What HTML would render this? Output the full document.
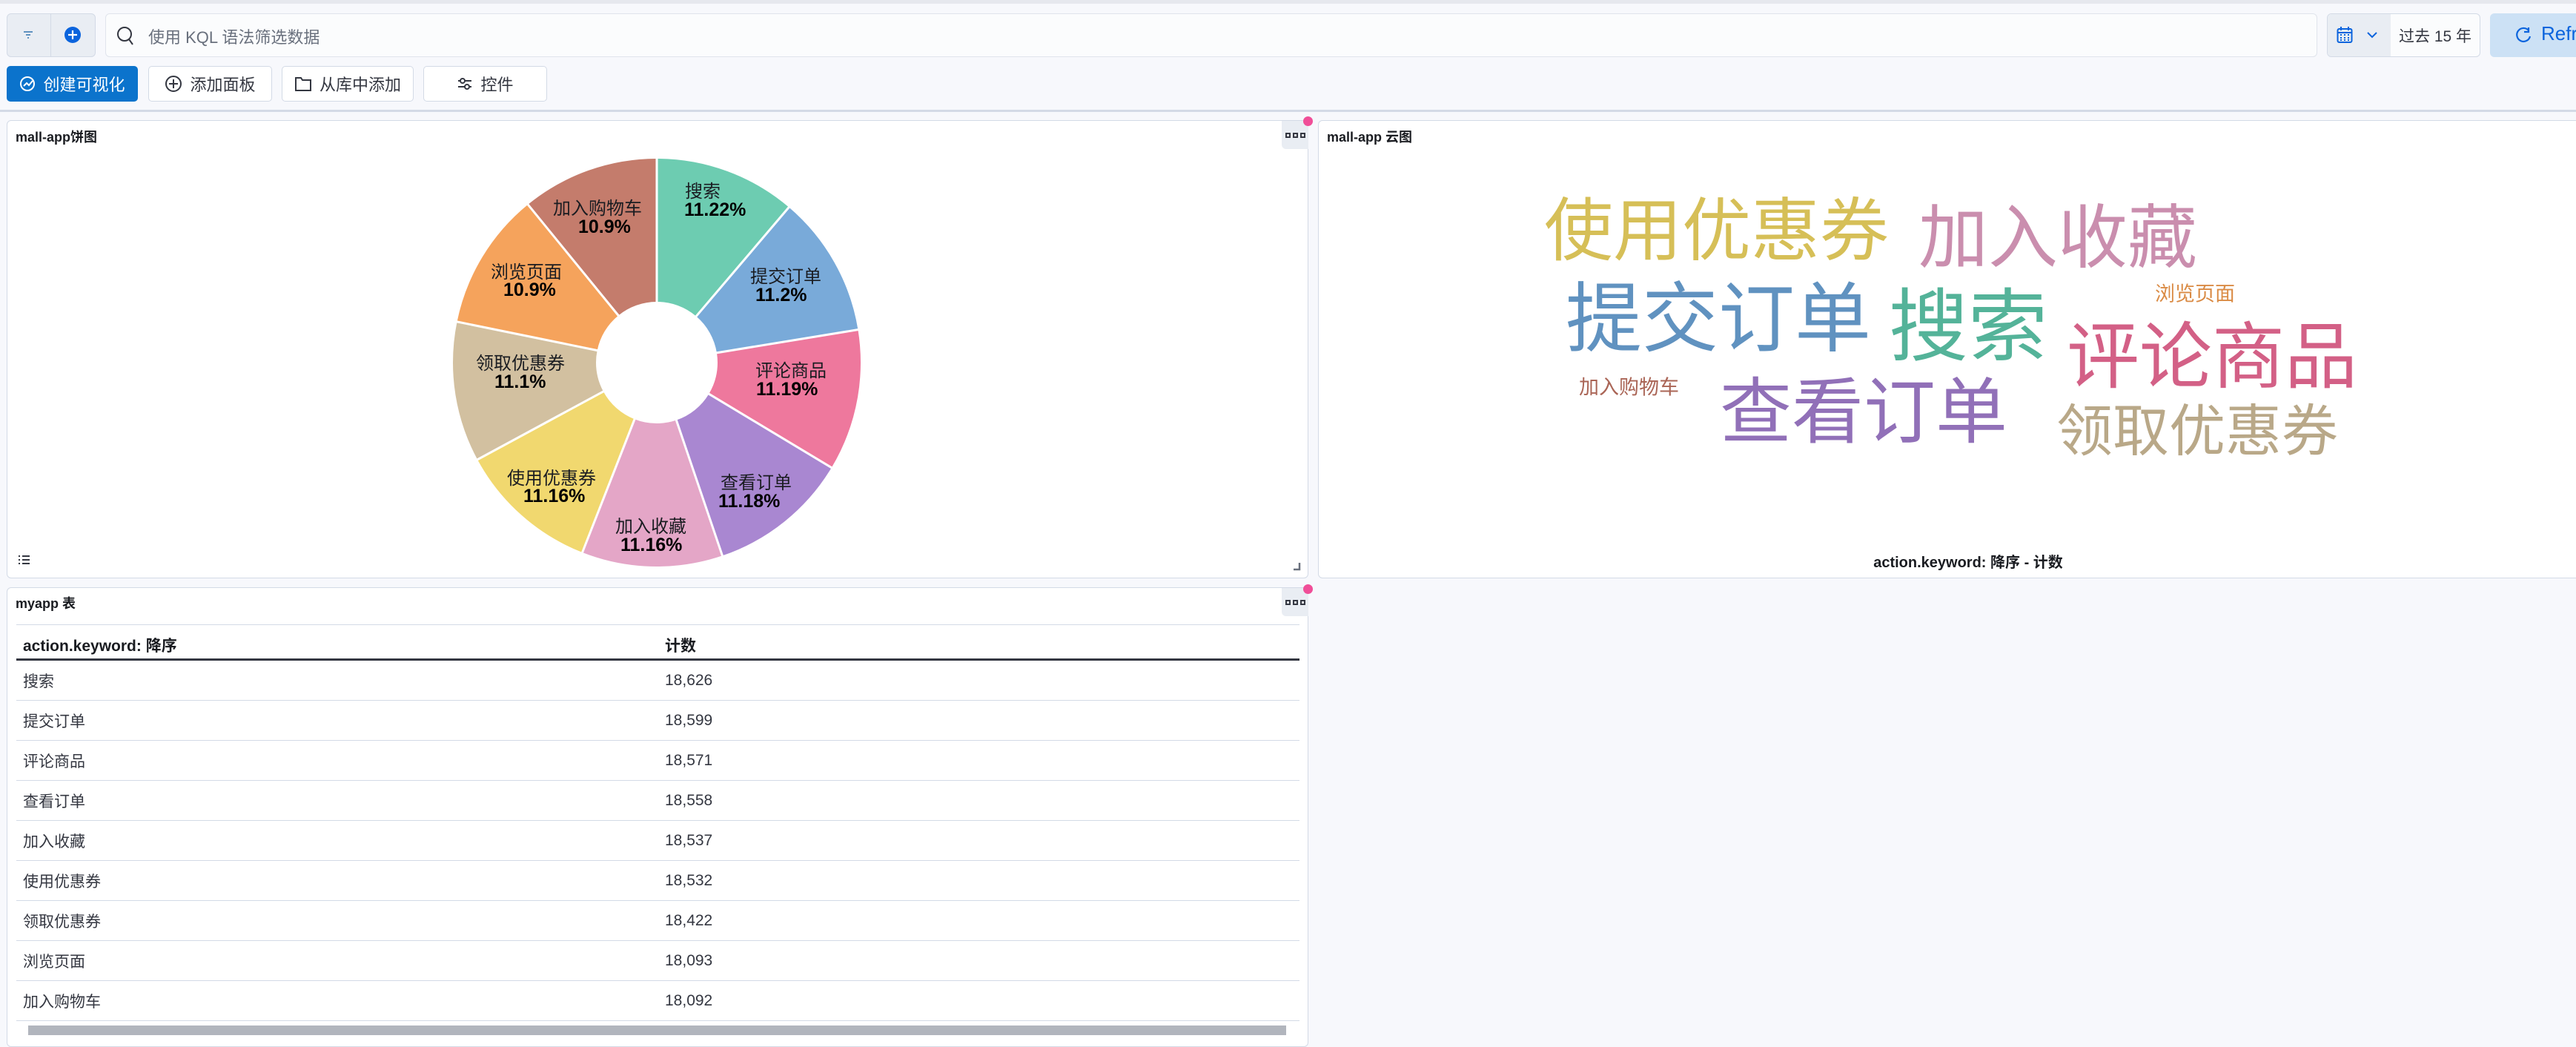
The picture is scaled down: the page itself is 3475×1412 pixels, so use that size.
<!DOCTYPE html>
<html><head><meta charset="utf-8"><style>
*{margin:0;padding:0;box-sizing:border-box}
body{width:3475px;height:1402px;background:#f7f8fc;font-family:"Liberation Sans","Noto Sans CJK SC",sans-serif;position:relative;overflow:hidden;color:#343741}
.abs{position:absolute}
.btn{position:absolute;top:89px;height:48px;border:1px solid #d3dae6;border-radius:5px;background:#fff;font-size:22px;display:flex;align-items:center;justify-content:center;gap:10px;color:#343741}
.panel{position:absolute;background:#fff;border:1px solid #d3dae6;border-radius:6px}
.ptitle{position:absolute;left:12px;top:8px;font-size:18px;font-weight:bold;color:#1a1c21}
.menu{position:absolute;width:36px;height:38px;background:#e9edf3;border-radius:0 0 0 6px;display:flex;align-items:center;justify-content:center;gap:3px}
.menu i{display:block;width:7px;height:7px;border:2px solid #343741}
.dot{position:absolute;width:13px;height:13px;border-radius:50%;background:#f04e98}
.row{position:absolute;left:22px;width:1731px;height:54px;border-bottom:1px solid #d3dae6;font-size:21px;color:#343741}
.row span{position:absolute;top:50%;transform:translateY(-50%)}
.wc{position:absolute;white-space:nowrap;line-height:1;transform:translateY(-50%)}
</style></head><body>
<div class="abs" style="left:0;top:0;width:3475px;height:5px;background:#e6e8ee"></div>
<div class="abs" style="left:9px;top:18px;width:120px;height:59px;background:#e9edf3;border:1px solid #d3dae6;border-radius:6px"></div>
<div class="abs" style="left:68px;top:19px;width:1px;height:57px;background:#d3dae6"></div>
<svg class="abs" style="left:30px;top:40px" width="16" height="14"><path d="M2 3h12M5 7h6M7 11h2" stroke="#6092c0" stroke-width="2"/></svg>
<svg class="abs" style="left:86px;top:35px" width="24" height="24"><circle cx="12" cy="12" r="11" fill="#0b64dd"/><path d="M12 6v12M6 12h12" stroke="#fff" stroke-width="2.2"/></svg>
<div class="abs" style="left:142px;top:18px;width:2984px;height:59px;background:#fbfcfd;border:1px solid #e0e4ec;border-radius:6px"></div>
<svg class="abs" style="left:156px;top:34px" width="28" height="30"><circle cx="12" cy="12" r="9" fill="none" stroke="#343741" stroke-width="2"/><path d="M18 19l5 7" stroke="#343741" stroke-width="2"/></svg>
<div class="abs" style="left:200px;top:33px;font-size:22px;color:#69707d">使用 KQL 语法筛选数据</div>
<div class="abs" style="left:3139px;top:18px;width:207px;height:59px;background:#fbfcfd;border:1px solid #d3dae6;border-radius:6px;overflow:hidden"><div style="width:85px;height:100%;background:#e9edf3"></div></div>
<svg class="abs" style="left:3152px;top:35px" width="22" height="24"><rect x="1.5" y="4" width="19" height="18" rx="2" fill="none" stroke="#0b64dd" stroke-width="2"/><path d="M2 9h18M6 1v5M16 1v5" stroke="#0b64dd" stroke-width="2"/><path d="M5 12h2M10 12h2M15 12h2M5 16h2M10 16h2M15 16h2M5 19h2M10 19h2M15 19h2" stroke="#0b64dd" stroke-width="2"/></svg>
<svg class="abs" style="left:3193px;top:42px" width="14" height="10"><path d="M1 2l6 6 6-6" stroke="#0b64dd" stroke-width="2" fill="none"/></svg>
<div class="abs" style="left:3236px;top:33px;font-size:21px;color:#343741">过去 15 年</div>
<div class="abs" style="left:3359px;top:18px;width:130px;height:59px;background:#cce1f5;border-radius:6px"></div>
<svg class="abs" style="left:3392px;top:36px" width="24" height="24"><path d="M19 5A9 9 0 1 0 21 13" fill="none" stroke="#0b64dd" stroke-width="2.2"/><path d="M19 1v6h-6" fill="none" stroke="#0b64dd" stroke-width="2.2"/></svg>
<div class="abs" style="left:3428px;top:30px;font-size:26px;color:#0b64dd;font-weight:500">Refresh</div>
<div class="btn" style="left:9px;width:177px;background:#0b73cc;border-color:#0b73cc;color:#fff">
<svg width="22" height="26"><circle cx="11" cy="13" r="9" fill="none" stroke="#fff" stroke-width="2"/><path d="M6 16l4-4 3 3 5-6" fill="none" stroke="#fff" stroke-width="2"/></svg>创建可视化</div>
<div class="btn" style="left:200px;width:167px"><svg width="24" height="24"><circle cx="12" cy="12" r="10" fill="none" stroke="#343741" stroke-width="2"/><path d="M12 6v12M6 12h12" stroke="#343741" stroke-width="2"/></svg>添加面板</div>
<div class="btn" style="left:380px;width:178px"><svg width="24" height="22"><path d="M2 3h7l2 3h11v14H2z" fill="none" stroke="#343741" stroke-width="2"/></svg>从库中添加</div>
<div class="btn" style="left:571px;width:167px"><svg width="22" height="20"><path d="M2 6h18M2 14h18" stroke="#343741" stroke-width="2"/><circle cx="8" cy="6" r="3" fill="#fff" stroke="#343741" stroke-width="2"/><circle cx="14" cy="14" r="3" fill="#fff" stroke="#343741" stroke-width="2"/></svg>控件</div>
<div class="abs" style="left:0;top:148px;width:3475px;height:3px;background:#d3dae6"></div>

<div class="panel" style="left:9px;top:162px;width:1756px;height:618px"></div>
<div class="ptitle" style="left:21px;top:171px">mall-app饼图</div>
<div class="menu" style="left:1729px;top:163px"><i></i><i></i><i></i></div>
<div class="dot" style="left:1758px;top:157px"></div>
<svg class="abs" style="left:24px;top:748px" width="18" height="16"><path d="M1 2h2M6 2h10M1 7h2M6 7h10M1 12h2M6 12h10" stroke="#343741" stroke-width="2"/></svg>
<svg class="abs" style="left:1744px;top:758px" width="12" height="12"><path d="M9 1v9H1" fill="none" stroke="#69707d" stroke-width="2.5"/></svg>
<svg class="abs" style="left:0;top:0" width="1760" height="800" font-family="Liberation Sans, Noto Sans CJK SC, sans-serif">
<g transform="translate(886,489) rotate(-90)" fill="none" stroke-width="193">
<circle r="178.5" pathLength="100" stroke="#6dccb1" stroke-dasharray="11.22 100" stroke-dashoffset="0"/>
<circle r="178.5" pathLength="100" stroke="#79aad9" stroke-dasharray="11.2 100" stroke-dashoffset="-11.22"/>
<circle r="178.5" pathLength="100" stroke="#ee789d" stroke-dasharray="11.19 100" stroke-dashoffset="-22.42"/>
<circle r="178.5" pathLength="100" stroke="#a987d1" stroke-dasharray="11.18 100" stroke-dashoffset="-33.61"/>
<circle r="178.5" pathLength="100" stroke="#e4a6c7" stroke-dasharray="11.16 100" stroke-dashoffset="-44.79"/>
<circle r="178.5" pathLength="100" stroke="#f1d86f" stroke-dasharray="11.16 100" stroke-dashoffset="-55.95"/>
<circle r="178.5" pathLength="100" stroke="#d2c0a0" stroke-dasharray="11.1 100" stroke-dashoffset="-67.11"/>
<circle r="178.5" pathLength="100" stroke="#f5a35c" stroke-dasharray="10.9 100" stroke-dashoffset="-78.21"/>
<circle r="178.5" pathLength="100" stroke="#c47c6c" stroke-dasharray="10.9 100" stroke-dashoffset="-89.11"/>
</g>
<g transform="translate(886,489)" stroke="#fff" stroke-width="3">
<line y1="-80" y2="-277"/><line y1="-80" y2="-277" transform="rotate(40.39)"/><line y1="-80" y2="-277" transform="rotate(80.71)"/><line y1="-80" y2="-277" transform="rotate(121)"/><line y1="-80" y2="-277" transform="rotate(161.24)"/><line y1="-80" y2="-277" transform="rotate(201.42)"/><line y1="-80" y2="-277" transform="rotate(241.6)"/><line y1="-80" y2="-277" transform="rotate(281.56)"/><line y1="-80" y2="-277" transform="rotate(320.8)"/>
</g>
<g font-size="24" fill="#1a1c21">
<text x="924" y="266">搜索</text><text x="746" y="289">加入购物车</text><text x="1012" y="381">提交订单</text><text x="662" y="375">浏览页面</text><text x="642" y="498">领取优惠券</text><text x="1019" y="508">评论商品</text><text x="684" y="653">使用优惠券</text><text x="972" y="659">查看订单</text><text x="830" y="718">加入收藏</text>
</g>
<g font-size="25" font-weight="bold" fill="#000">
<text x="923" y="291">11.22%</text><text x="780" y="314">10.9%</text><text x="1019" y="406">11.2%</text><text x="679" y="399">10.9%</text><text x="667" y="523">11.1%</text><text x="1020" y="533">11.19%</text><text x="706" y="677">11.16%</text><text x="969" y="684">11.18%</text><text x="837" y="743">11.16%</text>
</g>
</svg>

<div class="panel" style="left:1778px;top:162px;width:1710px;height:618px"></div>
<div class="ptitle" style="left:1790px;top:171px">mall-app 云图</div>
<div class="wc" style="left:2083px;top:312px;font-size:93px;color:#d6bf57">使用优惠券</div>
<div class="wc" style="left:2588px;top:321px;font-size:94px;color:#ca8eae">加入收藏</div>
<div class="wc" style="left:2112px;top:430px;font-size:103px;color:#6092c0">提交订单</div>
<div class="wc" style="left:2548px;top:441px;font-size:107px;color:#54b399">搜索</div>
<div class="wc" style="left:2907px;top:397px;font-size:27px;color:#da8b45">浏览页面</div>
<div class="wc" style="left:2788px;top:481px;font-size:98px;color:#d36086">评论商品</div>
<div class="wc" style="left:2130px;top:523px;font-size:27px;color:#aa6556">加入购物车</div>
<div class="wc" style="left:2320px;top:556px;font-size:97px;color:#9170b8">查看订单</div>
<div class="wc" style="left:2774px;top:583px;font-size:76px;color:#b9a888">领取优惠券</div>
<div class="abs" style="left:2520px;top:742px;width:270px;text-align:center;font-size:20px;font-weight:bold;color:#1a1c21">action.keyword: 降序 - 计数</div>

<div class="panel" style="left:9px;top:792px;width:1756px;height:620px"></div>
<div class="ptitle" style="left:21px;top:800px">myapp 表</div>
<div class="menu" style="left:1729px;top:793px"><i></i><i></i><i></i></div>
<div class="dot" style="left:1758px;top:788px"></div>
<div class="abs" style="left:22px;top:842px;width:1731px;height:1px;background:#d3dae6"></div>
<div class="abs" style="left:31px;top:855px;font-size:21px;font-weight:bold;color:#1a1c21">action.keyword: 降序</div>
<div class="abs" style="left:897px;top:855px;font-size:21px;font-weight:bold;color:#1a1c21">计数</div>
<div class="abs" style="left:22px;top:888px;width:1731px;height:3px;background:#343741"></div>
<div class="row" style="top:891px"><span style="left:9px">搜索</span><span style="left:875px">18,626</span></div>
<div class="row" style="top:945px"><span style="left:9px">提交订单</span><span style="left:875px">18,599</span></div>
<div class="row" style="top:999px"><span style="left:9px">评论商品</span><span style="left:875px">18,571</span></div>
<div class="row" style="top:1053px"><span style="left:9px">查看订单</span><span style="left:875px">18,558</span></div>
<div class="row" style="top:1107px"><span style="left:9px">加入收藏</span><span style="left:875px">18,537</span></div>
<div class="row" style="top:1161px"><span style="left:9px">使用优惠券</span><span style="left:875px">18,532</span></div>
<div class="row" style="top:1215px"><span style="left:9px">领取优惠券</span><span style="left:875px">18,422</span></div>
<div class="row" style="top:1269px"><span style="left:9px">浏览页面</span><span style="left:875px">18,093</span></div>
<div class="row" style="top:1323px"><span style="left:9px">加入购物车</span><span style="left:875px">18,092</span></div>
<div class="abs" style="left:38px;top:1383px;width:1697px;height:13px;background:#b1b5bd"></div>
</body></html>
